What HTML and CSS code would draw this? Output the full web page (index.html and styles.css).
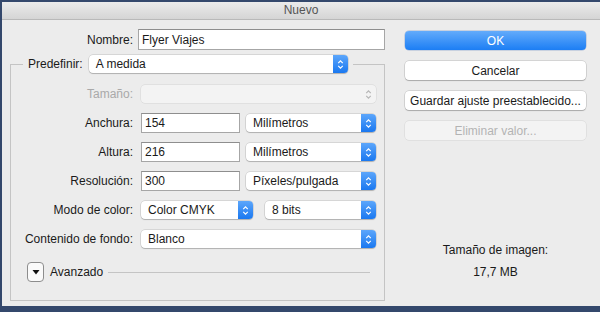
FILE: index.html
```html
<!DOCTYPE html>
<html lang="es">
<head>
    <meta charset="UTF-8">
    <meta name="viewport" content="width=device-width, initial-scale=1.0">
    <title>Nuevo</title>
    <link rel="stylesheet" href="styles.css">
</head>
<body>
    <div class="window">
        <div class="titlebar">Nuevo</div>
        <div class="content">
            <div class="main">
                <div class="name-row">
                    <label class="name-label" for="nombre">Nombre:</label>
                    <input class="field field-name" id="nombre" value="Flyer Viajes">
                </div>

                <fieldset class="group">
                    <legend class="group-head">
                        <span class="head-label">Predefinir:</span>
                        <div class="popup popup-preset">
                            <span>A medida</span>
                            <span class="stepper"><svg viewBox="0 0 10 14"><path d="M2.5 5.5 5 3 7.5 5.5M2.5 8.5 5 11 7.5 8.5"/></svg></span>
                        </div>
                    </legend>

                    <div class="row disabled">
                        <span class="row-label">Tamaño:</span>
                        <div class="popup popup-off popup-full">
                            <span></span>
                            <span class="stepper"><svg viewBox="0 0 10 14"><path d="M2.5 5.5 5 3 7.5 5.5M2.5 8.5 5 11 7.5 8.5"/></svg></span>
                        </div>
                    </div>

                    <div class="row">
                        <label class="row-label" for="anchura">Anchura:</label>
                        <input class="field field-num" id="anchura" value="154">
                        <div class="popup popup-unit">
                            <span>Milímetros</span>
                            <span class="stepper"><svg viewBox="0 0 10 14"><path d="M2.5 5.5 5 3 7.5 5.5M2.5 8.5 5 11 7.5 8.5"/></svg></span>
                        </div>
                    </div>

                    <div class="row">
                        <label class="row-label" for="altura">Altura:</label>
                        <input class="field field-num" id="altura" value="216">
                        <div class="popup popup-unit">
                            <span>Milímetros</span>
                            <span class="stepper"><svg viewBox="0 0 10 14"><path d="M2.5 5.5 5 3 7.5 5.5M2.5 8.5 5 11 7.5 8.5"/></svg></span>
                        </div>
                    </div>

                    <div class="row">
                        <label class="row-label" for="resolucion">Resolución:</label>
                        <input class="field field-num" id="resolucion" value="300">
                        <div class="popup popup-unit">
                            <span>Píxeles/pulgada</span>
                            <span class="stepper"><svg viewBox="0 0 10 14"><path d="M2.5 5.5 5 3 7.5 5.5M2.5 8.5 5 11 7.5 8.5"/></svg></span>
                        </div>
                    </div>

                    <div class="row">
                        <span class="row-label">Modo de color:</span>
                        <div class="popup popup-mode">
                            <span>Color CMYK</span>
                            <span class="stepper"><svg viewBox="0 0 10 14"><path d="M2.5 5.5 5 3 7.5 5.5M2.5 8.5 5 11 7.5 8.5"/></svg></span>
                        </div>
                        <div class="popup popup-bits">
                            <span>8 bits</span>
                            <span class="stepper"><svg viewBox="0 0 10 14"><path d="M2.5 5.5 5 3 7.5 5.5M2.5 8.5 5 11 7.5 8.5"/></svg></span>
                        </div>
                    </div>

                    <div class="row">
                        <span class="row-label">Contenido de fondo:</span>
                        <div class="popup popup-full">
                            <span>Blanco</span>
                            <span class="stepper"><svg viewBox="0 0 10 14"><path d="M2.5 5.5 5 3 7.5 5.5M2.5 8.5 5 11 7.5 8.5"/></svg></span>
                        </div>
                    </div>

                    <div class="advanced">
                        <span class="disclosure"><svg viewBox="0 0 8 6"><path d="M0.5 1h7L4 5.5z"/></svg></span>
                        <span class="advanced-label">Avanzado</span>
                        <span class="advanced-line"></span>
                    </div>
                </fieldset>
            </div>

            <div class="side">
                <button class="btn btn-default">OK</button>
                <button class="btn">Cancelar</button>
                <button class="btn">Guardar ajuste preestablecido...</button>
                <button class="btn" disabled>Eliminar valor...</button>

                <div class="info">
                    <p>Tamaño de imagen:</p>
                    <p>17,7 MB</p>
                </div>
            </div>
        </div>
    </div>
</body>
</html>
```

FILE: styles.css
```css
* {
    margin: 0;
    padding: 0;
    box-sizing: border-box;
    font-family: 'Liberation Sans', Arial, sans-serif;
}

body {
    background-color: #34486c;
    width: 600px;
    height: 312px;
    overflow: hidden;
}

.window {
    margin: 2px 0 0 2px;
    height: 304px;
    background: #ececec;
    color: #1a1a1a;
    font-size: 12px;
}

.titlebar {
    height: 18px;
    line-height: 17px;
    text-align: center;
    color: #555;
    font-size: 12px;
    background: linear-gradient(#ebebeb, #d5d5d5);
    border-bottom: 1px solid #b9b9b9;
}

.content {
    display: flex;
}

.main {
    width: 383px;
    padding: 9px 0 0 8px;
}

.name-row {
    display: flex;
    align-items: center;
    height: 21px;
}

.name-label {
    width: 123px;
    text-align: right;
    margin-right: 5px;
}

.field {
    height: 21px;
    border: 1px solid #a6a6a6;
    border-top-color: #8e8e8e;
    background: #fff;
    color: #1a1a1a;
    font-size: 12px;
    padding: 0 3px;
    outline: none;
}

.field-name {
    width: 247px;
}

.field-num {
    width: 99px;
    height: 20px;
    margin-right: 6px;
}

/* group box */

.group {
    margin-top: 5px;
    width: 375px;
    border: 1px solid #c4c4c4;
    padding: 11px 0 18px 0;
}

.group-head {
    display: flex;
    align-items: center;
    margin-left: 12px;
    padding: 0 5px;
}

.head-label {
    margin-right: 6px;
}

.row {
    display: flex;
    align-items: center;
    height: 20px;
    margin-bottom: 9px;
}

.row-label {
    width: 122px;
    text-align: right;
    margin-right: 8px;
}

.row.disabled .row-label {
    color: #a9a9a9;
}

/* popup buttons */

.popup {
    display: flex;
    align-items: center;
    justify-content: space-between;
    height: 18px;
    padding-left: 7px;
    background: #fff;
    border-radius: 4px;
    box-shadow: 0 0 0 0.5px rgba(0, 0, 0, 0.18), 0 1px 1px rgba(0, 0, 0, 0.18);
}

.popup-preset {
    width: 259px;
}

.popup-full {
    width: 235px;
}

.popup-unit {
    width: 130px;
}

.popup-mode {
    width: 112px;
    margin-right: 12px;
}

.popup-bits {
    width: 111px;
}

.stepper {
    width: 15px;
    height: 18px;
    display: flex;
    align-items: center;
    justify-content: center;
    background: linear-gradient(#5ca6fb, #1a78f0);
    border-radius: 0 4px 4px 0;
}

.stepper svg {
    width: 9px;
    height: 13px;
    fill: none;
    stroke: #fff;
    stroke-width: 1.3;
}

.popup-off {
    background: #f3f3f3;
    box-shadow: 0 0 0 0.5px rgba(0, 0, 0, 0.1);
}

.popup-off .stepper {
    background: none;
}

.popup-off .stepper svg {
    stroke: #b5b5b5;
}

/* advanced toggle */

.advanced {
    display: flex;
    align-items: center;
    margin: 13px 0 0 16px;
    height: 20px;
}

.disclosure {
    width: 17px;
    height: 20px;
    display: flex;
    align-items: center;
    justify-content: center;
    background: #fafafa;
    border: 1px solid #8d8d8d;
    border-radius: 4px;
    margin-right: 6px;
}

.disclosure svg {
    width: 8px;
    height: 6px;
    fill: #111;
}

.advanced-label {
    margin-right: 5px;
}

.advanced-line {
    flex: 1;
    height: 1px;
    background: #c4c4c4;
    margin-right: 14px;
}

/* right column */

.side {
    width: 181px;
    margin-left: 20px;
    padding-top: 11px;
    display: flex;
    flex-direction: column;
}

.btn {
    height: 19px;
    margin-bottom: 11px;
    background: #fff;
    border: none;
    border-radius: 4px;
    box-shadow: 0 0 0 0.5px rgba(0, 0, 0, 0.2), 0 1px 1px rgba(0, 0, 0, 0.2);
    color: #1a1a1a;
    font-size: 12px;
}

.btn-default {
    background: linear-gradient(#63abfb, #1c7ef4);
    color: #fff;
    box-shadow: 0 0 0 0.5px rgba(0, 60, 160, 0.3);
}

.btn:disabled {
    background: #f3f3f3;
    color: #b3b3b3;
    box-shadow: 0 0 0 0.5px rgba(0, 0, 0, 0.1);
}

.info {
    margin-top: 92px;
    text-align: center;
    line-height: 14px;
}

.info p + p {
    margin-top: 8px;
}
```
